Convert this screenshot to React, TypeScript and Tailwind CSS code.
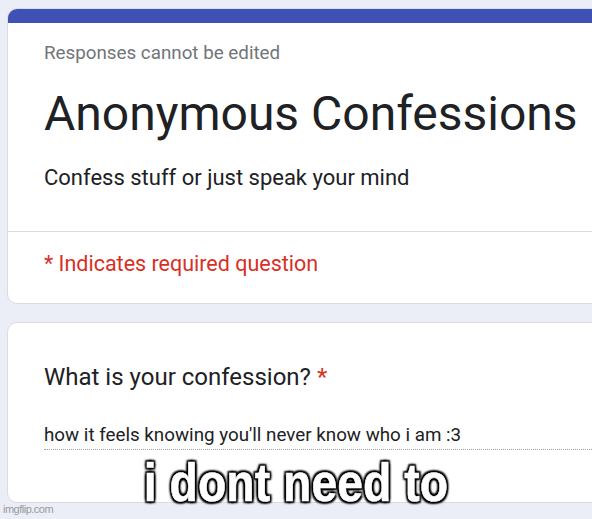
import React from 'react';

const roboto = { fontFamily: 'Roboto, "Noto Sans", Arial, sans-serif' };

export default function App() {
  return (
    <div className="relative w-[592px] h-[519px] overflow-hidden bg-[#ebeef7]" style={roboto}>
      <div className="pl-[7px] pt-[8px]">
        <div className="w-[620px] rounded-l-[10px] bg-white border border-[#dadce0] overflow-hidden">
          <div className="h-[14px] bg-[#3f51b5]" />
          <div className="pl-[36px] pt-[18px] pb-[39px]">
            <p className="text-[18.8px] text-[#70757a] leading-[24px]">Responses cannot be edited</p>
            <h1 className="mt-[21px] text-[48px] leading-[56px] text-[#202124]">Anonymous Confessions</h1>
            <p className="mt-[22px] text-[22px] leading-[28px] text-[#202124]">Confess stuff or just speak your mind</p>
          </div>
          <div className="border-t border-[#dadce0] pl-[36px] pt-[18px] pb-[25px]">
            <p className="text-[21.5px] leading-[28px] text-[#d93025]">* Indicates required question</p>
          </div>
        </div>

        <div className="mt-[18px] w-[620px] h-[181px] rounded-l-[10px] bg-white border border-[#dadce0] pl-[36px] pt-[39px]">
          <p className="text-[24px] leading-[30px] text-[#202124]">
            What is your confession? <span className="text-[#d93025]">*</span>
          </p>
          <div className="mt-[31px] border-b border-dotted border-[#9aa0a6] pb-[2px]">
            <p className="text-[18.8px] leading-[24px] text-[#202124]">how it feels knowing you'll never know who i am :3</p>
          </div>
        </div>
      </div>

      {/* meme caption over the form */}
      <div
        className="absolute left-0 w-[592px] top-[452px] text-center text-white font-bold text-[54px] leading-[60px] scale-x-[0.86]"
        style={{
          fontFamily: '"Liberation Sans", Arial, sans-serif',
          WebkitTextStroke: '0.6px #fff',
          textShadow:
            '0 0 2px #000, 0 0 3px #000, 0 0 4px #000, 2px 2px 2px #000, -2px -2px 2px #000, 2px -2px 2px #000, -2px 2px 2px #000',
        }}
      >
        i dont need to
      </div>

      <div
        className="absolute left-[3px] bottom-[3px] text-[11px] leading-[13px] text-[#9a9a9a] tracking-[-0.5px]"
        style={{ fontFamily: '"Liberation Sans", Arial, sans-serif' }}
      >
        imgflip.com
      </div>
    </div>
  );
}
